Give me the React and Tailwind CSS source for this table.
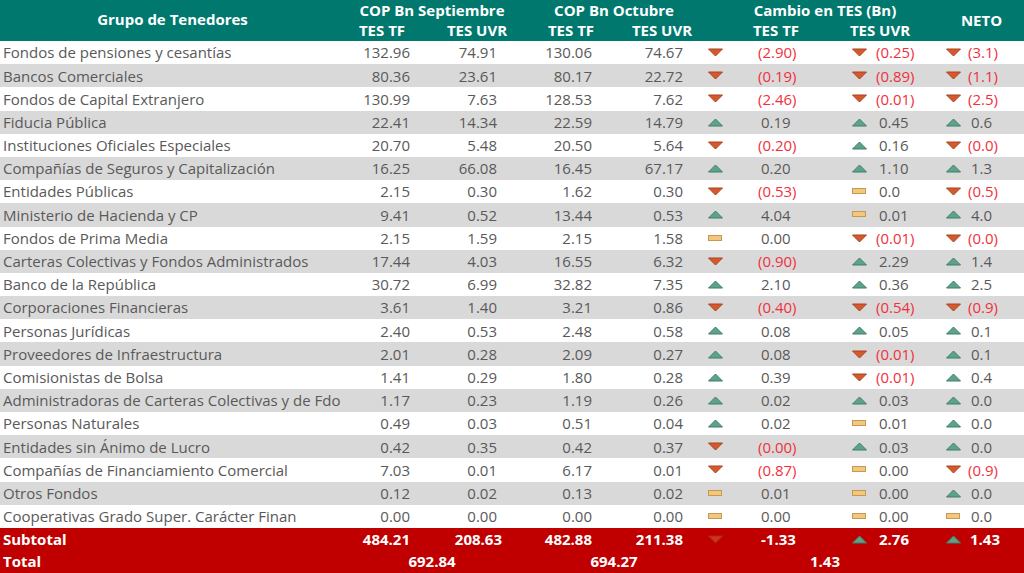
import React from 'react';

const rows = [
  ['Fondos de pensiones y cesantías', '132.96', '74.91', '130.06', '74.67', 'd', '(2.90)', 'd', '(0.25)', 'd', '(3.1)'],
  ['Bancos Comerciales', '80.36', '23.61', '80.17', '22.72', 'd', '(0.19)', 'd', '(0.89)', 'd', '(1.1)'],
  ['Fondos de Capital Extranjero', '130.99', '7.63', '128.53', '7.62', 'd', '(2.46)', 'd', '(0.01)', 'd', '(2.5)'],
  ['Fiducia Pública', '22.41', '14.34', '22.59', '14.79', 'u', '0.19', 'u', '0.45', 'u', '0.6'],
  ['Instituciones Oficiales Especiales', '20.70', '5.48', '20.50', '5.64', 'd', '(0.20)', 'u', '0.16', 'd', '(0.0)'],
  ['Compañías de Seguros y Capitalización', '16.25', '66.08', '16.45', '67.17', 'u', '0.20', 'u', '1.10', 'u', '1.3'],
  ['Entidades Públicas', '2.15', '0.30', '1.62', '0.30', 'd', '(0.53)', 'e', '0.0', 'd', '(0.5)'],
  ['Ministerio de Hacienda y CP', '9.41', '0.52', '13.44', '0.53', 'u', '4.04', 'e', '0.01', 'u', '4.0'],
  ['Fondos de Prima Media', '2.15', '1.59', '2.15', '1.58', 'e', '0.00', 'd', '(0.01)', 'd', '(0.0)'],
  ['Carteras Colectivas y Fondos Administrados', '17.44', '4.03', '16.55', '6.32', 'd', '(0.90)', 'u', '2.29', 'u', '1.4'],
  ['Banco de la República', '30.72', '6.99', '32.82', '7.35', 'u', '2.10', 'u', '0.36', 'u', '2.5'],
  ['Corporaciones Financieras', '3.61', '1.40', '3.21', '0.86', 'd', '(0.40)', 'd', '(0.54)', 'd', '(0.9)'],
  ['Personas Jurídicas', '2.40', '0.53', '2.48', '0.58', 'u', '0.08', 'u', '0.05', 'u', '0.1'],
  ['Proveedores de Infraestructura', '2.01', '0.28', '2.09', '0.27', 'u', '0.08', 'd', '(0.01)', 'u', '0.1'],
  ['Comisionistas de Bolsa', '1.41', '0.29', '1.80', '0.28', 'u', '0.39', 'd', '(0.01)', 'u', '0.4'],
  ['Administradoras de Carteras Colectivas y de Fdo', '1.17', '0.23', '1.19', '0.26', 'u', '0.02', 'u', '0.03', 'u', '0.0'],
  ['Personas Naturales', '0.49', '0.03', '0.51', '0.04', 'u', '0.02', 'e', '0.01', 'u', '0.0'],
  ['Entidades sin Ánimo de Lucro', '0.42', '0.35', '0.42', '0.37', 'd', '(0.00)', 'u', '0.03', 'u', '0.0'],
  ['Compañías de Financiamiento Comercial', '7.03', '0.01', '6.17', '0.01', 'd', '(0.87)', 'e', '0.00', 'd', '(0.9)'],
  ['Otros Fondos', '0.12', '0.02', '0.13', '0.02', 'e', '0.01', 'e', '0.00', 'u', '0.0'],
  ['Cooperativas Grado Super. Carácter Finan', '0.00', '0.00', '0.00', '0.00', 'e', '0.00', 'e', '0.00', 'e', '0.0'],
];

// flechas tipo "conjunto de iconos" de Excel
const Mark = ({ type, faded }) => {
  if (type === 'u') {
    return (
      <svg width="15" height="9" viewBox="0 0 15 9">
        <polygon points="0.5,8 14.5,8 7.5,1" fill="#5da38a" stroke="#3e7f68" strokeWidth="1" />
      </svg>
    );
  }
  if (type === 'd') {
    return (
      <svg width="15" height="9" viewBox="0 0 15 9" className={faded ? 'opacity-60' : ''}>
        <polygon points="0.5,1 14.5,1 7.5,8" fill="#d5592f" stroke="#a9421f" strokeWidth="1" />
      </svg>
    );
  }
  return (
    <svg width="14" height="7" viewBox="0 0 14 7">
      <rect x="0.5" y="0.5" width="13" height="5" fill="#f5c67d" stroke="#c39a52" strokeWidth="1" />
    </svg>
  );
};

const Val = ({ v }) => {
  const neg = v.startsWith('(');
  return <span className={neg ? 'text-[#f2303c]' : 'pl-[3px]'}>{v}</span>;
};

const App = () => {
  return (
    <div className="w-[1024px] h-[573px] overflow-hidden bg-white text-[15px] text-[#595959]" style={{ fontFamily: '"Open Sans", "Liberation Sans", sans-serif' }}>
      {/* Encabezado */}
      <div className="flex h-[41px] bg-[#00786e] text-white font-bold text-[15px] leading-none">
        <div className="w-[345px] flex items-center justify-center pb-[3px]">Grupo de Tenedores</div>
        <div className="flex flex-col w-[596px]">
          <div className="flex h-[19px] items-center pt-[1px]">
            <div className="w-[174px] text-center">COP Bn Septiembre</div>
            <div className="w-[190px] text-center">COP Bn Octubre</div>
            <div className="w-[232px] text-center">Cambio en TES (Bn)</div>
          </div>
          <div className="flex h-[22px] items-center">
            <div className="w-[74px] text-center">TES TF</div>
            <div className="w-[116px] text-center">TES UVR</div>
            <div className="w-[72px] text-center">TES TF</div>
            <div className="w-[110px] text-center">TES UVR</div>
            <div className="w-[118px] text-center">TES TF</div>
            <div className="w-[90px] text-center">TES UVR</div>
          </div>
        </div>
        <div className="flex-1 flex items-center justify-center pr-[2px]">NETO</div>
      </div>

      {/* Filas */}
      {rows.map((r, i) => (
        <div key={i} className={`flex items-center h-[23.2px] ${i % 2 === 1 ? 'bg-[#d9d9d9]' : 'bg-white'}`}>
          <div className="w-[345px] pl-[3px] whitespace-nowrap">{r[0]}</div>
          <div className="w-[70px] text-right pr-[5px]">{r[1]}</div>
          <div className="w-[90px] text-right pr-[8px]">{r[2]}</div>
          <div className="w-[95px] text-right pr-[8px]">{r[3]}</div>
          <div className="w-[90px] text-right pr-[7px]">{r[4]}</div>
          <div className="w-[50px] flex justify-center"><Mark type={r[5]} /></div>
          <div className="w-[106px] pl-[18px]"><Val v={r[6]} /></div>
          <div className="w-[26px] flex justify-center"><Mark type={r[7]} /></div>
          <div className="w-[68px] pl-[4px]"><Val v={r[8]} /></div>
          <div className="w-[26px] flex justify-center"><Mark type={r[9]} /></div>
          <div className="flex-1 pl-[2px]"><Val v={r[10]} /></div>
        </div>
      ))}

      {/* Subtotal y total */}
      <div className="bg-[#c00000] text-white font-bold">
        <div className="flex items-center h-[22.5px]">
          <div className="w-[345px] pl-[3px]">Subtotal</div>
          <div className="w-[70px] text-right pr-[5px]">484.21</div>
          <div className="w-[90px] text-right pr-[3px]">208.63</div>
          <div className="w-[95px] text-right pr-[8px]">482.88</div>
          <div className="w-[90px] text-right pr-[7px]">211.38</div>
          <div className="w-[50px] flex justify-center"><Mark type="d" faded /></div>
          <div className="w-[106px] pl-[21px]">-1.33</div>
          <div className="w-[26px] flex justify-center"><Mark type="u" /></div>
          <div className="w-[68px] pl-[7px]">2.76</div>
          <div className="w-[26px] flex justify-center"><Mark type="u" /></div>
          <div className="flex-1 pl-[4px]">1.43</div>
        </div>
        <div className="flex items-center h-[22.5px]">
          <div className="w-[345px] pl-[3px]">Total</div>
          <div className="w-[174px] text-center">692.84</div>
          <div className="w-[190px] text-center">694.27</div>
          <div className="w-[232px] text-center">1.43</div>
        </div>
      </div>
    </div>
  );
};

export default App;
